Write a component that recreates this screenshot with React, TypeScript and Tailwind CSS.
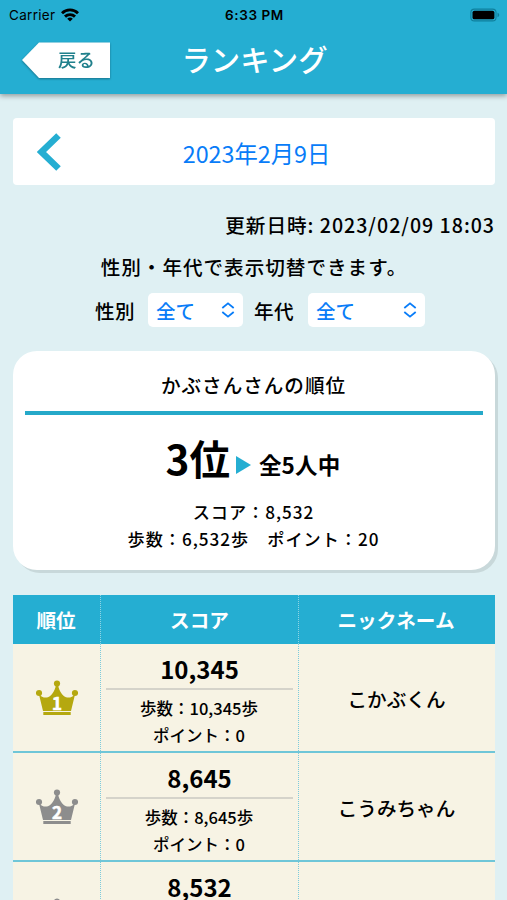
const rows = [
    { rank: 1, score: "10,345", steps: "10,345", points: 0, name: "こかぶくん", color: "#b5a80f" },
    { rank: 2, score: "8,645", steps: "8,645", points: 0, name: "こうみちゃん", color: "#8d8d8d" },
    { rank: 3, score: "8,532", steps: "6,532", points: 20, name: "かぶさん", color: "#8d8d8d" },
];

function StatusBar() {
    return (
        <div className="grid h-[26px] grid-cols-3 items-center pl-[9px] pr-[7px] font-['Inter','Liberation_Sans',sans-serif] text-[13.5px] text-black">
            <div className="flex items-center gap-[6px]">
                <span className="font-normal tracking-[0.3px]">Carrier</span>
                <svg width="18" height="14" viewBox="0 0 18 14" fill="none" stroke="#000" strokeWidth="2.9">
                    <path d="M1 5.2a11.4 11.4 0 0 1 16 0" />
                    <path d="M4 8.6a7.2 7.2 0 0 1 10 0" />
                    <path d="M9 13.6 6.2 10.8a4 4 0 0 1 5.6 0z" fill="#000" stroke="none" />
                </svg>
            </div>
            <span className="text-center font-semibold tracking-[0.6px]">6:33 PM</span>
            <svg className="justify-self-end" width="30" height="14" viewBox="0 0 31 14">
                <rect x="0.9" y="0.9" width="26" height="12.2" rx="3.6" fill="none" stroke="#0f7f9c" strokeWidth="1.1" />
                <rect x="2.6" y="2.5" width="22.6" height="9" rx="2" fill="#000" />
                <path d="M28.4 4.8c2.4.8 2.4 3.6 0 4.4z" fill="#0f7f9c" />
            </svg>
        </div>
    );
}

function Header() {
    return (
        <header className="relative h-[94px] shrink-0 bg-[#25aed2] shadow-[0_2px_5px_rgba(0,0,0,0.35)]">
            <StatusBar />
            <div className="grid h-[66px] grid-cols-[160px_1fr_160px] items-center">
                <button className="relative ml-[22px] mt-px flex h-[36px] w-[89px] items-center drop-shadow-[0_1px_1px_rgba(0,0,0,0.35)]">
                    <svg className="absolute inset-0" width="89" height="36" viewBox="0 0 89 36">
                        <path d="M0 18 17 0.500h71V36H17z" fill="#fff" />
                    </svg>
                    <span className="relative pb-[2px] pl-[36px] text-[18.5px] font-medium tracking-normal text-[#20808c]">戻る</span>
                </button>
                <h1 className="whitespace-nowrap pb-[2px] pl-[2px] text-center text-[29.4px] font-medium leading-[30px] tracking-normal text-white">ランキング</h1>
            </div>
        </header>
    );
}

function Select({ value, className }: { value: string; className: string }) {
    return (
        <button className={`flex h-[34px] items-center justify-between rounded-[5px] bg-white px-[8px] tracking-normal text-[#087cf8] ${className}`}>
            <span className="pt-px">{value}</span>
            <svg width="14" height="16" viewBox="0 0 14 16" fill="none" stroke="currentColor" strokeWidth="1.8">
                <path d="M1.300 6 7 1.400 12.700 6M1.300 10 7 14.600 12.700 10" />
            </svg>
        </button>
    );
}

function Crown({ rank, color }: { rank: number; color: string }) {
    return (
        <svg width="42" height="36" viewBox="0 0 42 36" fill={color}>
            <circle cx="21" cy="3.500" r="3.100" />
            <circle cx="3" cy="13" r="3.100" />
            <circle cx="39" cy="13" r="3.100" />
            <path d="M3 14.500c2.500 2.800 6 3.700 9 2.700C16 15.500 18.500 11 20 5.500h2c1.500 5.500 4 10 8 11.700 3 1 6.500.1 9-2.700L35 31H7z" />
            <path d="M7.300 32h27.400v3H7.300z" />
            <text x="21" y="29.500" textAnchor="middle" fontSize="17" fontWeight="700" fill="#fff" stroke="#fff" strokeWidth="0.6">{rank}</text>
        </svg>
    );
}

function MyRank() {
    return (
        <section className="mt-6 h-[219px] rounded-[24px] bg-white px-3 pt-[19px] text-center shadow-[3px_3px_0_#c8d8da]">
            <h2 className="h-[41px] pr-px font-medium leading-[30px]">かぶさんさんの順位</h2>
            <div className="h-1 bg-[#25a9c9]" />
            <div className="mt-[13px] flex h-[60px] items-center justify-center pr-[2px] font-bold">
                <span className="text-[40.5px] tracking-[0px]">3位</span>
                <svg className="ml-[6px] mt-[13px]" width="15" height="18" viewBox="0 0 15 18">
                    <path d="M0 0 15 9 0 18z" fill="#25aed2" />
                </svg>
                <span className="ml-[8px] mt-[12px] text-[22.5px] tracking-[0.2px]">全5人中</span>
            </div>
            <div className="mt-[10px] pr-px text-[17.15px] leading-[27px]">
                <p>スコア：8,532</p>
                <p>歩数：6,532歩　ポイント：20</p>
            </div>
        </section>
    );
}

function RankingTable() {
    return (
        <section className="mt-[25px] text-center tracking-normal">
            <div className="grid h-[49px] grid-cols-[88px_198px_1fr] items-center bg-[#25aed2] font-bold leading-[49px] text-white">
                <div className="border-r border-dotted border-[#8fd4e4] pr-px">順位</div>
                <div className="border-r border-dotted border-[#8fd4e4]">スコア</div>
                <div className="pr-[2px]">ニックネーム</div>
            </div>
            {rows.map((row) => (
                <div key={row.rank} className="grid h-[109px] grid-cols-[88px_198px_1fr] border-b-2 border-[#6fc6d8] bg-[#f7f3e4]">
                    <div className="flex items-center justify-center border-r border-dotted border-[#7ccbdc]">
                        <Crown rank={row.rank} color={row.color} />
                    </div>
                    <div className="border-r border-dotted border-[#7ccbdc] px-[5px]">
                        <p className="h-[46px] border-b-2 border-[#d5d3ca] pt-[5px] text-[24px] font-bold leading-[39px]">{row.score}</p>
                        <div className="pr-px pt-[5px] text-[16.5px] leading-[27px]">
                            <p>歩数：{row.steps}歩</p>
                            <p>ポイント：{row.points}</p>
                        </div>
                    </div>
                    <div className="flex items-center justify-center pr-px pt-[2px]">{row.name}</div>
                </div>
            ))}
        </section>
    );
}

export default function App() {
    return (
        <div lang="ja" className="flex h-screen w-full flex-col overflow-hidden bg-[#dff0f3] font-['Noto_Sans_CJK_JP',sans-serif] text-[19.6px] font-medium leading-[30px] tracking-[0.05em] text-black">
            <Header />
            <main className="pl-[13px] pr-[12px] pt-6">
                {/* 日付の切り替え */}
                <div className="grid h-[67px] grid-cols-[72px_1fr_72px] items-center rounded-[4px] bg-white">
                    <svg className="ml-[24px]" width="24" height="38" viewBox="0 0 24 38" fill="none" stroke="#25aed2" strokeWidth="6.500">
                        <path d="M21.500 2.500 4.500 19 21.500 35.500" />
                    </svg>
                    <span className="pl-[5px] pt-[2px] text-center text-[23.3px] font-normal tracking-[0px] text-[#087cf8]">2023年2月9日</span>
                </div>
                <p className="mt-[25px] text-right">更新日時: 2023/02/09 18:03</p>
                <p className="mt-3 text-center">性別・年代で表示切替できます。</p>
                <div className="mt-[11px] flex items-center pl-[82px]">
                    <span className="pt-px tracking-[0.02em]">性別</span>
                    <Select value="全て" className="ml-[13px] w-[95px]" />
                    <span className="ml-[11px] pt-px tracking-[0.02em]">年代</span>
                    <Select value="全て" className="ml-[14px] w-[117px]" />
                </div>
                <MyRank />
                <RankingTable />
            </main>
        </div>
    );
}
